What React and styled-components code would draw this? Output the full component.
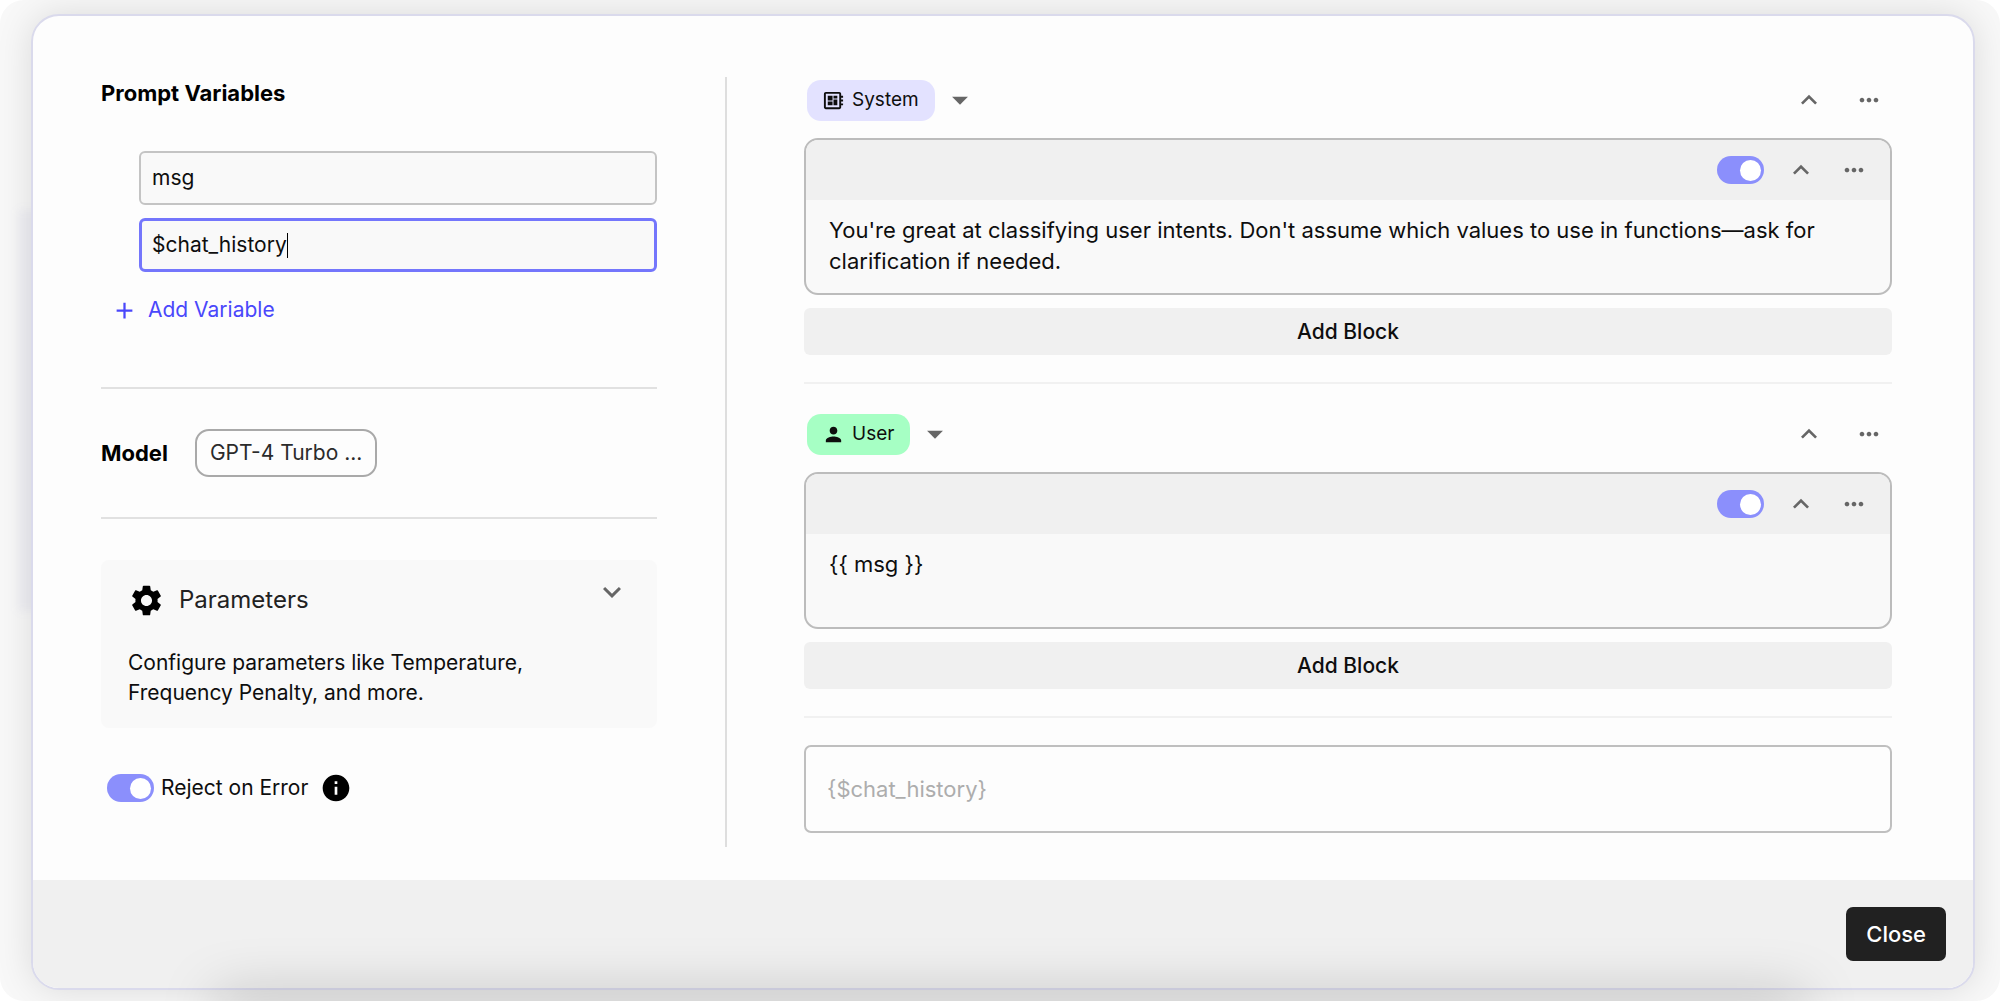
import React, { useState } from "react";
import styled, { createGlobalStyle } from "styled-components";
import {
  MdAdd,
  MdArrowDropDown,
  MdExpandLess,
  MdExpandMore,
  MdInfo,
  MdMoreHoriz,
  MdOutlineDeveloperBoard,
  MdPerson,
  MdSettings,
} from "react-icons/md";

const GlobalStyle = createGlobalStyle`
  *, *::before, *::after { box-sizing: border-box; }
  body { margin: 0; background: #ffffff; }
  button, input, textarea { font: inherit; color: inherit; }
  svg { flex: none; }
  h2, h3, p { margin: 0; }
`;

const Backdrop = styled.div`
  position: relative;
  display: flex;
  min-height: 100vh;
  padding: 14px 25px 11px 31px;
  overflow: hidden;
  border-radius: 24px;
  background: #f8f8f8;
  color: #0e0e0e;
  font-family: Inter, "Liberation Sans", sans-serif;
  font-size: 21px;
  line-height: 28px;
`;

const SideShade = styled.div`
  position: absolute;
  left: 18px;
  top: 21%;
  bottom: 39%;
  width: 40px;
  background: rgba(110, 110, 190, 0.06);
  filter: blur(5px);
`;

const BottomShade = styled.div`
  position: absolute;
  z-index: 2;
  left: 11%;
  right: 10%;
  bottom: -20px;
  height: 20px;
  box-shadow: 0 0 56px 4px rgba(0, 0, 0, 0.26);
  pointer-events: none;
`;

const Dialog = styled.section`
  position: relative;
  z-index: 1;
  flex: 1;
  display: flex;
  flex-direction: column;
  overflow: hidden;
  border: 2px solid #dadaec;
  border-radius: 28px;
  background: #fdfdfd;
  box-shadow: 0 0 36px rgba(0, 0, 0, 0.12);
`;

const Body = styled.div`
  flex: 1;
  display: flex;
  padding: 61px 81px 33px 68px;
`;

const Sidebar = styled.aside`
  flex: none;
  display: flex;
  flex-direction: column;
  width: 626px;
  padding-right: 68px;
  border-right: 2px solid #dedede;
`;

const Main = styled.main`
  flex: 1;
  min-width: 0;
  padding-left: 77px;
`;

const Heading = styled.h2`
  font-size: 22px;
  font-weight: 700;
  line-height: 32px;
  color: #000000;
`;

const Fields = styled.div`
  display: flex;
  flex-direction: column;
  gap: 13px;
  padding: 42px 0 0 38px;
`;

const Field = styled.label`
  display: flex;
  align-items: center;
  height: 54px;
  padding: 0 ${(p) => (p.$active ? 10 : 11)}px;
  border: ${(p) => (p.$active ? "3px solid #7476fc" : "2px solid #c4c4c4")};
  border-radius: 6px;
  background: #f9f9f9;
`;

const FieldInput = styled.input`
  field-sizing: content;
  padding: 0;
  border: 0;
  outline: 0;
  background: none;
  caret-color: transparent;
`;

const Caret = styled.span`
  width: 1px;
  height: 25px;
  background: #000000;
`;

const AddVariable = styled.button`
  display: flex;
  align-items: center;
  align-self: flex-start;
  gap: 10px;
  margin: 24px 0 63px;
  padding: 0 0 0 10px;
  border: 0;
  background: none;
  color: #4a47fb;
`;

const ModelRow = styled.div`
  display: flex;
  align-items: center;
  gap: 27px;
  padding: 40px 0;
  border: 2px solid #e1e1e1;
  border-width: 2px 0;
`;

const ModelButton = styled.button`
  height: 48px;
  padding: 0 13px;
  border: 2px solid #a9a9a9;
  border-radius: 14px;
  background: #fdfdfd;
  color: #2b2b2b;
`;

const Panel = styled.section`
  margin-top: 41px;
  padding: 22px 27px 20px;
  border-radius: 8px;
  background: #f9f9f9;
`;

const PanelHead = styled.div`
  display: flex;
  align-items: center;
  gap: 14px;
  height: 36px;
`;

const PanelTitle = styled.h3`
  flex: 1;
  font-size: 24px;
  font-weight: 400;
  color: #222222;
`;

const PanelText = styled.p`
  width: 420px;
  padding-top: 30px;
  line-height: 30px;
`;

const IconButton = styled.button`
  display: flex;
  align-items: center;
  justify-content: center;
  width: 32px;
  height: 32px;
  padding: 0;
  border: 0;
  background: none;
  color: #666666;
  font-size: 32px;
`;

const DotsButton = styled(IconButton)`
  font-size: 28px;
`;

const CaretButton = styled(IconButton)`
  width: 36px;
  font-size: 38px;
`;

const PanelToggle = styled(IconButton)`
  align-self: flex-start;
  width: 36px;
  height: 20px;
  font-size: 36px;
`;

const RejectRow = styled.div`
  display: flex;
  align-items: center;
  gap: 12px;
  padding: 44px 0 0 6px;
`;

const SwitchLabel = styled.label`
  display: flex;
  align-items: center;
  gap: 7px;
`;

const Switch = styled.input`
  appearance: none;
  display: flex;
  align-items: center;
  width: 47px;
  height: 28px;
  margin: 0;
  padding: 0 3px;
  border-radius: 14px;
  background: #c8c8c8;

  &::before {
    content: "";
    width: 21px;
    height: 21px;
    border-radius: 50%;
    background: #ffffff;
  }

  &:checked {
    justify-content: flex-end;
    background: #8b8ffc;
  }
`;

const Message = styled.section`
  padding-bottom: 27px;
  margin-bottom: 27px;
  border-bottom: 2px solid #f1f1f1;
`;

const MessageHead = styled.div`
  display: flex;
  align-items: center;
  gap: 28px;
  height: 46px;
  margin-bottom: 15px;
  padding: 0 7px 0 3px;
`;

const Role = styled.div`
  flex: 1;
  display: flex;
  align-items: center;
  gap: 7px;
`;

const Badge = styled.span`
  display: flex;
  align-items: center;
  gap: 7px;
  height: 41px;
  padding: 0 16px 0 15px;
  border-radius: 14px;
  background: ${(p) => p.$tint};
  font-size: 19px;
`;

const Block = styled.div`
  overflow: hidden;
  border: 2px solid #bcbcbc;
  border-radius: 14px;
  background: #f9f9f9;
`;

const BlockHead = styled.div`
  display: flex;
  align-items: center;
  justify-content: flex-end;
  gap: 21px;
  height: 60px;
  padding: 0 20px;
  background: #f0f0f0;
`;

const BlockText = styled.textarea`
  display: block;
  width: 100%;
  height: 93px;
  padding: 15px 23px;
  border: 0;
  outline: 0;
  resize: none;
  overflow: hidden;
  background: none;
  font-size: 22px;
  line-height: 31px;
`;

const AddBlock = styled.button`
  width: 100%;
  height: 47px;
  margin-top: 13px;
  border: 0;
  border-radius: 6px;
  background: #f0f0f0;
  font-weight: 500;
`;

const HistoryInput = styled.input`
  display: block;
  width: 100%;
  height: 88px;
  padding: 0 21px;
  border: 2px solid #bfbfbf;
  border-radius: 7px;
  outline: 0;
  background: #fdfdfd;
  font-size: 22px;

  &::placeholder {
    color: #adadad;
    opacity: 1;
  }
`;

const Footer = styled.footer`
  display: flex;
  justify-content: flex-end;
  padding: 27px;
  background: #f0f0f0;
`;

const CloseButton = styled.button`
  height: 54px;
  padding: 0 20px;
  border: 0;
  border-radius: 7px;
  background: #212121;
  color: #ffffff;
  font-size: 22px;
  font-weight: 500;
`;

function PromptMessage({ role, icon, tint, text }) {
  const [value, setValue] = useState(text);
  return (
    <Message>
      <MessageHead>
        <Role>
          <Badge $tint={tint}>
            {icon}
            {role}
          </Badge>
          <CaretButton type="button" aria-label="Change role">
            <MdArrowDropDown />
          </CaretButton>
        </Role>
        <IconButton type="button" aria-label="Collapse message">
          <MdExpandLess />
        </IconButton>
        <DotsButton type="button" aria-label="Message options">
          <MdMoreHoriz />
        </DotsButton>
      </MessageHead>
      <Block>
        <BlockHead>
          <Switch type="checkbox" defaultChecked aria-label="Enable block" />
          <IconButton type="button" aria-label="Collapse block">
            <MdExpandLess />
          </IconButton>
          <DotsButton type="button" aria-label="Block options">
            <MdMoreHoriz />
          </DotsButton>
        </BlockHead>
        <BlockText
          aria-label={role + " prompt"}
          value={value}
          onChange={(e) => setValue(e.target.value)}
        />
      </Block>
      <AddBlock type="button">Add Block</AddBlock>
    </Message>
  );
}

export default function App() {
  return (
    <Backdrop>
      <GlobalStyle />
      <SideShade />
      <Dialog role="dialog" aria-label="Prompt editor">
        <Body>
          <Sidebar>
            <Heading>Prompt Variables</Heading>
            <Fields>
              <Field>
                <FieldInput aria-label="Variable 1" defaultValue="msg" />
              </Field>
              <Field $active>
                <FieldInput aria-label="Variable 2" defaultValue="$chat_history" />
                <Caret />
              </Field>
            </Fields>
            <AddVariable type="button">
              <MdAdd size={27} />
              Add Variable
            </AddVariable>
            <ModelRow>
              <Heading>Model</Heading>
              <ModelButton type="button" aria-haspopup="listbox">
                GPT-4 Turbo ...
              </ModelButton>
            </ModelRow>
            <Panel>
              <PanelHead>
                <MdSettings size={37} color="#000000" />
                <PanelTitle>Parameters</PanelTitle>
                <PanelToggle type="button" aria-label="Expand parameters">
                  <MdExpandMore />
                </PanelToggle>
              </PanelHead>
              <PanelText>
                Configure parameters like Temperature, Frequency Penalty, and more.
              </PanelText>
            </Panel>
            <RejectRow>
              <SwitchLabel>
                <Switch type="checkbox" defaultChecked />
                Reject on Error
              </SwitchLabel>
              <MdInfo size={32} color="#000000" />
            </RejectRow>
          </Sidebar>
          <Main>
            <PromptMessage
              role="System"
              tint="#e3e2ff"
              icon={<MdOutlineDeveloperBoard size={23} />}
              text="You're great at classifying user intents. Don't assume which values to use in functions—ask for clarification if needed."
            />
            <PromptMessage
              role="User"
              tint="#a6ffc4"
              icon={<MdPerson size={23} />}
              text="{{ msg }}"
            />
            <HistoryInput aria-label="Chat history" placeholder="{$chat_history}" />
          </Main>
        </Body>
        <Footer>
          <CloseButton type="button">Close</CloseButton>
        </Footer>
      </Dialog>
      <BottomShade />
    </Backdrop>
  );
}
